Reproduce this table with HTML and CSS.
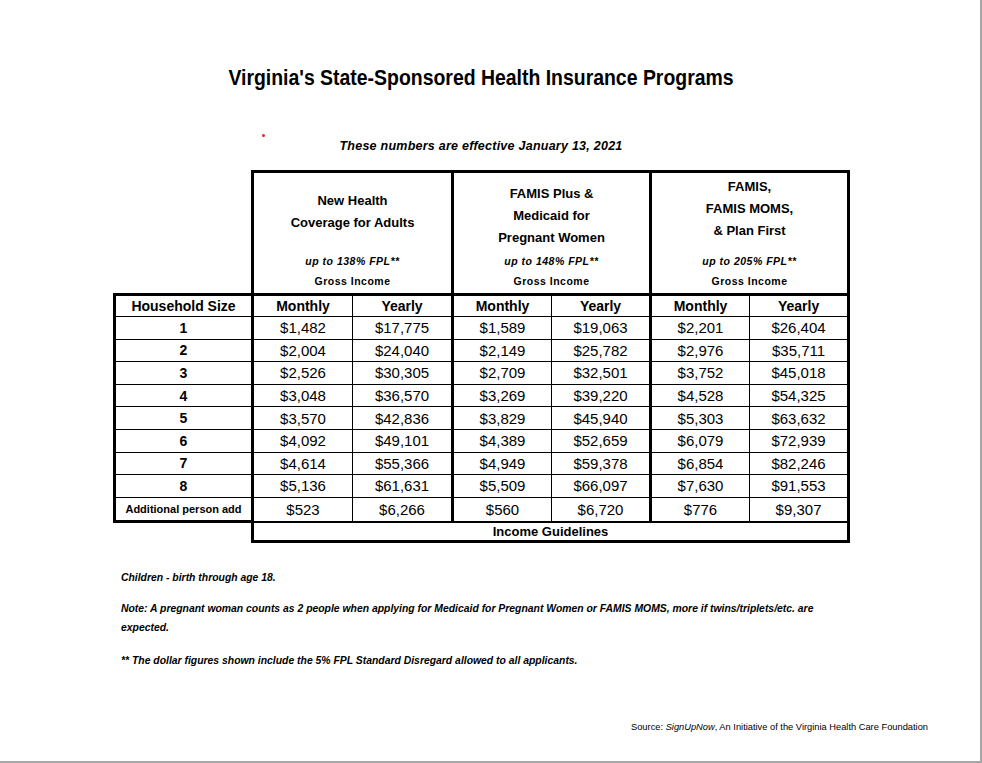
FILE: index.html
```html
<!DOCTYPE html>
<html lang="en">
<head>
<meta charset="utf-8">
<title>Virginia's State-Sponsored Health Insurance Programs</title>
<link rel="stylesheet" href="styles.css">
</head>
<body>
<div class="page">
  <span class="stray-mark"></span>
  <header class="head">
    <h1 class="title">Virginia's State-Sponsored Health Insurance Programs</h1>
    <p class="effective">These numbers are effective January 13, 2021</p>
  </header>

  <table class="guide">
    <colgroup>
      <col class="col-hh">
      <col class="col-a"><col class="col-a">
      <col class="col-b"><col class="col-b">
      <col class="col-b"><col class="col-b">
    </colgroup>
    <thead>
      <tr class="row-groups">
        <td class="blank"></td>
        <th colspan="2" class="grp">
          <div class="grp-inner">
            <div class="grp-title">New Health<br>Coverage for Adults</div>
            <div class="grp-fpl"><span class="fpl">up to 138% FPL**</span><span class="gross">Gross Income</span></div>
          </div>
        </th>
        <th colspan="2" class="grp">
          <div class="grp-inner">
            <div class="grp-title grp-title-low">FAMIS Plus &amp;<br>Medicaid for<br>Pregnant Women</div>
            <div class="grp-fpl"><span class="fpl">up to 148% FPL**</span><span class="gross">Gross Income</span></div>
          </div>
        </th>
        <th colspan="2" class="grp">
          <div class="grp-inner">
            <div class="grp-title grp-title-high">FAMIS,<br>FAMIS MOMS,<br>&amp; Plan First</div>
            <div class="grp-fpl"><span class="fpl">up to 205% FPL**</span><span class="gross">Gross Income</span></div>
          </div>
        </th>
      </tr>
      <tr class="row-sub">
        <th class="hh">Household Size</th>
        <th class="m">Monthly</th><th>Yearly</th>
        <th class="m">Monthly</th><th>Yearly</th>
        <th class="m">Monthly</th><th class="last">Yearly</th>
      </tr>
    </thead>
    <tbody>
      <tr><th class="hh">1</th><td class="m">$1,482</td><td>$17,775</td><td class="m">$1,589</td><td>$19,063</td><td class="m">$2,201</td><td class="last">$26,404</td></tr>
      <tr><th class="hh">2</th><td class="m">$2,004</td><td>$24,040</td><td class="m">$2,149</td><td>$25,782</td><td class="m">$2,976</td><td class="last">$35,711</td></tr>
      <tr><th class="hh">3</th><td class="m">$2,526</td><td>$30,305</td><td class="m">$2,709</td><td>$32,501</td><td class="m">$3,752</td><td class="last">$45,018</td></tr>
      <tr><th class="hh">4</th><td class="m">$3,048</td><td>$36,570</td><td class="m">$3,269</td><td>$39,220</td><td class="m">$4,528</td><td class="last">$54,325</td></tr>
      <tr><th class="hh">5</th><td class="m">$3,570</td><td>$42,836</td><td class="m">$3,829</td><td>$45,940</td><td class="m">$5,303</td><td class="last">$63,632</td></tr>
      <tr><th class="hh">6</th><td class="m">$4,092</td><td>$49,101</td><td class="m">$4,389</td><td>$52,659</td><td class="m">$6,079</td><td class="last">$72,939</td></tr>
      <tr><th class="hh">7</th><td class="m">$4,614</td><td>$55,366</td><td class="m">$4,949</td><td>$59,378</td><td class="m">$6,854</td><td class="last">$82,246</td></tr>
      <tr><th class="hh">8</th><td class="m">$5,136</td><td>$61,631</td><td class="m">$5,509</td><td>$66,097</td><td class="m">$7,630</td><td class="last">$91,553</td></tr>
      <tr class="row-add"><th class="hh hh-small">Additional person add</th><td class="m">$523</td><td>$6,266</td><td class="m">$560</td><td>$6,720</td><td class="m">$776</td><td class="last">$9,307</td></tr>
      <tr class="row-foot"><td class="blank"></td><td colspan="6" class="foot">Income Guidelines</td></tr>
    </tbody>
  </table>

  <section class="notes">
    <p class="note note-children">Children - birth through age 18.</p>
    <p class="note note-preg">Note: A pregnant woman counts as 2 people when applying for Medicaid for Pregnant Women or FAMIS MOMS, more if twins/triplets/etc. are<br>expected.</p>
    <p class="note">** The dollar figures shown include the 5% FPL Standard Disregard allowed to all applicants.</p>
  </section>

  <p class="source">Source: <em>SignUpNow</em>, An Initiative of the Virginia Health Care Foundation</p>
</div>
</body>
</html>
```

FILE: styles.css
```css
* {
  box-sizing: border-box;
}

body {
  margin: 0;
  background: #ffffff;
  color: #000000;
  font-family: "Liberation Sans", Arial, sans-serif;
}

.page {
  position: relative;
  width: 982px;
  height: 763px;
  border-right: 2px solid #a6a6a6;
  border-bottom: 2px solid #a6a6a6;
  display: flex;
  flex-direction: column;
  padding-bottom: 27px;
}

.stray-mark {
  position: absolute;
  left: 262px;
  top: 134px;
  width: 3px;
  height: 3px;
  border-radius: 50%;
  background: #d42a2a;
}

.head {
  margin-left: 113px;
  width: 736px;
  padding-top: 66px;
  text-align: center;
}

.title {
  margin: 0;
  font-family: "Liberation Sans", Arial, sans-serif;
  font-weight: bold;
  font-size: 22px;
  line-height: 24px;
  transform: scaleX(0.883);
  transform-origin: 50% 50%;
}

.effective {
  margin: 48px 0 0;
  font-style: italic;
  font-weight: bold;
  font-size: 12.5px;
  line-height: 16px;
  letter-spacing: 0.25px;
}

/* ---------- table ---------- */
.guide {
  margin: 16px 0 0 113px;
  border-collapse: collapse;
  table-layout: fixed;
  width: 734px;
}

.col-hh { width: 138px; }
.col-a { width: 100px; }
.col-b { width: 99px; }

.guide th,
.guide td {
  padding: 0;
  text-align: center;
  vertical-align: middle;
}

.blank {
  border: none;
}

.grp {
  border: 3px solid #000;
  vertical-align: top;
  height: 123px;
}

.grp-inner {
  height: 120px;
  display: flex;
  flex-direction: column;
}

.grp-title {
  height: 78px;
  display: flex;
  flex-direction: column;
  justify-content: center;
  font-size: 13px;
  font-weight: bold;
  line-height: 22px;
}

.grp-title-low {
  padding-top: 8px;
}

.grp-title-high {
  padding-bottom: 6px;
}

.grp-fpl {
  display: flex;
  flex-direction: column;
  font-size: 10.5px;
  font-weight: bold;
  line-height: 20px;
  letter-spacing: 0.5px;
}

.fpl {
  font-style: italic;
}

.row-sub th {
  border-top: 3px solid #000;
  border-bottom: 1px solid #000;
  border-right: 1px solid #000;
  height: 22px;
  font-size: 14px;
  font-weight: bold;
}

.guide tbody td,
.guide tbody th {
  height: 22.6px;
  border-bottom: 1px solid #000;
  border-right: 1px solid #000;
  font-size: 15px;
  font-weight: normal;
}

.guide .hh {
  border-left: 3px solid #000;
  border-right: 3px solid #000;
  font-size: 14px;
  font-weight: bold;
}

.guide .hh-small {
  font-size: 11px;
}

.guide .m {
  border-left: 3px solid #000;
}

.guide .last {
  border-right: 3px solid #000;
}

.guide .row-add td,
.guide .row-add th {
  height: 24.6px;
}

.guide .row-add td {
  border-bottom: 2px solid #000;
}

.guide .row-add th {
  border-bottom: 3px solid #000;
}

.guide .row-foot .blank {
  border: none;
  height: 20px;
}

.guide .foot {
  border: 3px solid #000;
  border-top: none;
  height: 20px;
  font-size: 13px;
  font-weight: bold;
  line-height: 16px;
}

/* ---------- notes ---------- */
.notes {
  margin: 25px 0 0 121px;
}

.note {
  margin: 0 0 14px;
  font-size: 10.4px;
  font-style: italic;
  font-weight: bold;
  line-height: 19px;
}

.note-children {
  margin-bottom: 12px;
}

.source {
  margin: auto 52px 0 0;
  text-align: right;
  font-size: 9.3px;
  line-height: 14px;
}
```
